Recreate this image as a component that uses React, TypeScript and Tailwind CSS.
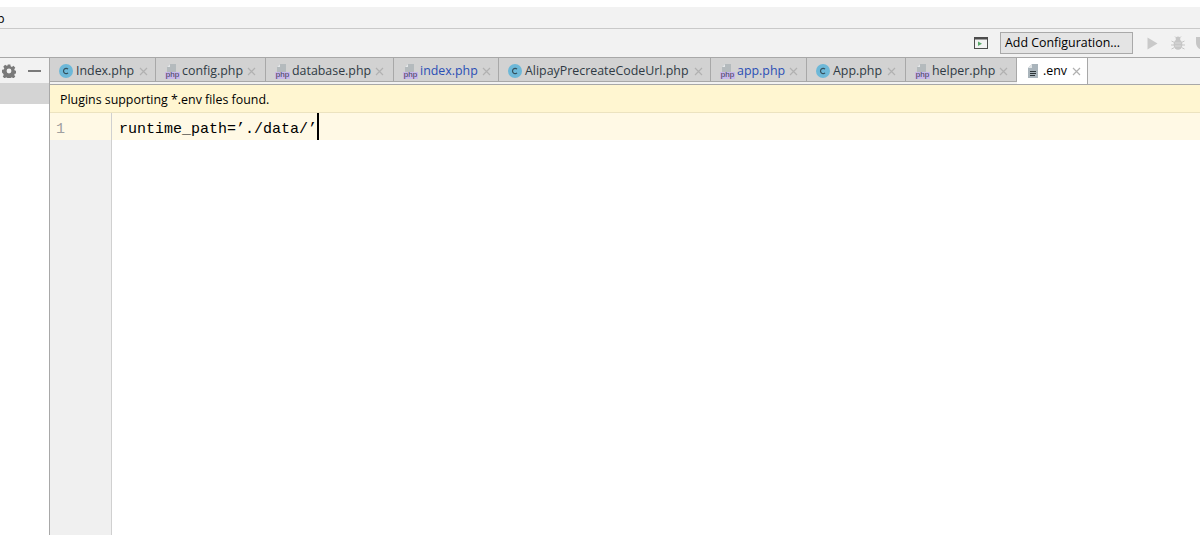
import React from "react";

const sans = "font-['Open_Sans','Noto_Sans',sans-serif]";

function ClassIcon() {
  return (
    <svg width="14" height="14" viewBox="0 0 14 14" className="shrink-0">
      <circle cx="7" cy="7" r="7" fill="#6db8d8" />
      <path d="M9 5.2A2.6 2.6 0 1 0 9 8.8" fill="none" stroke="#34505c" strokeWidth="1.2" />
    </svg>
  );
}

function PhpIcon() {
  return (
    <span className="relative block w-[15px] h-[15px] shrink-0">
      <svg width="15" height="15" viewBox="0 0 15 15" className="absolute left-0 top-0">
        <path d="M5 0h6v8H2V3z" fill="#b4babd" />
        <path d="M5 0v3H2z" fill="#e4e6e7" />
        <rect x="0" y="8" width="15" height="7" fill="#c9b8ea" />
      </svg>
      <span className="absolute left-0 top-[7.5px] w-[15px] text-center text-[8px] leading-[8px] text-[#3c3a55] font-['Liberation_Sans',sans-serif]">php</span>
    </span>
  );
}

function EnvIcon() {
  return (
    <svg width="10" height="14" viewBox="0 0 10 14" className="shrink-0">
      <path d="M4 0h6v14H0V4z" fill="#a9b4bb" />
      <path d="M4 0v4H0z" fill="#e1e5e7" />
      <path d="M2 7.5h6M2 9.5h6M2 11.5h5" stroke="#2b3337" strokeWidth="1" />
    </svg>
  );
}

function Close() {
  return (
    <svg width="9" height="9" viewBox="0 0 9 9" className="shrink-0">
      <path d="M1 1l7 7M8 1l-7 7" stroke="#b1b1b1" strokeWidth="1.2" />
    </svg>
  );
}

type Tab = { name: string; icon: "c" | "php" | "env"; w: string; blue?: boolean; active?: boolean };

function TabItem({ t }: { t: Tab }) {
  return (
    <div
      className={`${t.w} flex items-center shrink-0 border-r border-[#a8a8a8] ${
        t.active
          ? "h-[26px] bg-white gap-[5px] pl-[11px]"
          : `h-[24px] bg-[#d2d2d2] pl-[9px] pt-[3px] border-b ${t.icon === "php" ? "gap-[2px]" : "gap-[3px]"}`
      }`}
    >
      {t.icon === "c" ? <ClassIcon /> : t.icon === "php" ? <PhpIcon /> : <EnvIcon />}
      <span className={`text-[12.4px] leading-none whitespace-nowrap ${t.blue ? "text-[#2a4fb5]" : t.active ? "text-black" : "text-[#2f3a44]"}`}>
        {t.name}
      </span>
      <span className={`flex ${t.active ? "ml-0" : "ml-[2px]"}`}><Close /></span>
    </div>
  );
}

const tabs: Tab[] = [
  { name: "Index.php", icon: "c", w: "w-[106px]" },
  { name: "config.php", icon: "php", w: "w-[110px]" },
  { name: "database.php", icon: "php", w: "w-[128px]" },
  { name: "index.php", icon: "php", w: "w-[105px]", blue: true },
  { name: "AlipayPrecreateCodeUrl.php", icon: "c", w: "w-[212px]" },
  { name: "app.php", icon: "php", w: "w-[96px]", blue: true },
  { name: "App.php", icon: "c", w: "w-[99px]" },
  { name: "helper.php", icon: "php", w: "w-[111px]" },
  { name: ".env", icon: "env", w: "w-[71px]", active: true },
];

export default function App() {
  return (
    <div className={`w-[1200px] h-[535px] overflow-hidden bg-white flex flex-col ${sans}`}>
      <div className="h-[7px] shrink-0 bg-white" />
      <div className="h-[22px] shrink-0 bg-[#f2f2f2] border-b border-[#c9c9c9] flex items-center overflow-hidden pt-[3px]">
        <span className="text-[12.4px] leading-none text-black -ml-[3px]">p</span>
      </div>
      <div className="h-[29px] shrink-0 bg-[#f2f2f2] border-b border-[#a8a8a8] flex items-center justify-end overflow-hidden">
        <svg width="14" height="12" viewBox="0 0 14 12" className="shrink-0 mr-[12px]">
          <rect x="0.5" y="0.5" width="13" height="11" fill="#f2f2f2" stroke="#4d4d4d" />
          <rect x="0" y="0" width="14" height="2.5" fill="#4d4d4d" />
          <path d="M4 4.5l4 2.2-4 2.2z" fill="#59a869" />
        </svg>
        <div className="w-[133px] h-[22px] shrink-0 bg-[#e4e4e4] border border-[#a9a9a9] flex items-center pl-[4px] text-[12.4px] leading-none text-black whitespace-nowrap">
          Add Configuration...
        </div>
        <svg width="11" height="13" viewBox="0 0 11 13" className="shrink-0 ml-[14px]">
          <path d="M0.5 0.5l10 6-10 6z" fill="#c9c9c9" />
        </svg>
        <svg width="14" height="14" viewBox="0 0 14 14" className="shrink-0 ml-[13px]">
          <ellipse cx="7" cy="8.5" rx="4.4" ry="5.2" fill="#c6c6c6" />
          <circle cx="7" cy="3" r="2.4" fill="#c6c6c6" />
          <path d="M0.5 5l3 1.5M13.5 5l-3 1.5M0 9h3M14 9h-3M0.5 13l3-1.5M13.5 13l-3-1.5M4 0.5l1.5 1.5M10 0.5L8.5 2" stroke="#c6c6c6" strokeWidth="1" />
          <path d="M4 7h6M4 10h6" stroke="#dedede" strokeWidth="0.8" />
        </svg>
        <svg width="4" height="14" viewBox="0 0 4 14" className="shrink-0 ml-[11px]">
          <path d="M0 1h4v12C2 12.5 0 10 0 6z" fill="#c6c6c6" />
        </svg>
      </div>
      <div className="flex-1 flex min-h-0">
        <div className="w-[50px] shrink-0 border-r border-[#a8a8a8] bg-white flex flex-col">
          <div className="h-[25px] shrink-0 bg-[#f2f2f2] flex items-center pl-[2px] gap-[12px]">
            <svg width="14" height="14" viewBox="0 0 26 26" className="shrink-0">
              <path
                fillRule="evenodd"
                fill="#7a7a7a"
                d="M10.5 1h5l.6 3.4 2.3 1 2.8-2 3.5 3.5-2 2.8 1 2.3 3.3.6v5l-3.3.6-1 2.3 2 2.8-3.5 3.5-2.8-2-2.3 1-.6 3.3h-5l-.6-3.3-2.3-1-2.8 2-3.5-3.5 2-2.8-1-2.3L0 15.6v-5l3.3-.6 1-2.3-2-2.8L5.8 1.4l2.8 2 2.3-1zM13 8.5a4.5 4.5 0 1 0 0 9 4.5 4.5 0 0 0 0-9z"
              />
            </svg>
            <span className="block w-[13px] h-[2px] bg-[#7a7a7a]" />
          </div>
          <div className="h-[21px] shrink-0 bg-[#d4d4d4]" />
        </div>
        <div className="flex-1 min-w-0 flex flex-col">
          <div className="h-[26px] shrink-0 bg-[#f2f2f2] flex items-start">
            {tabs.map((t) => (
              <TabItem key={t.name} t={t} />
            ))}
          </div>
          <div className="h-px shrink-0 bg-[#a8a8a8]" />
          <div className="h-[28px] shrink-0 bg-[#fff6d1] border-b border-[#ece3c0] flex items-center pl-[10px] pt-[3px] text-[12.4px] leading-none text-black">
            Plugins supporting *.env files found.
          </div>
          <div className="flex-1 flex min-h-0">
            <div className="w-[62px] shrink-0 bg-[#f0f0f0] border-r border-[#d0d0d0]">
              <div className="h-[27px] bg-[#fff9e5] flex items-center pl-[6px] pt-[5px] text-[15px] leading-none text-[#a0a0a0] font-['Liberation_Mono',monospace]">
                1
              </div>
            </div>
            <div className="flex-1 min-w-0">
              <div className="h-[27px] bg-[#fff9e5] flex items-center pl-[7px] text-[15px] leading-none text-black font-['Liberation_Mono',monospace]">
                <span className="whitespace-pre pt-[5px]">runtime_path=’./data/’</span>
                <span className="block w-[2px] h-[27px] bg-black" />
              </div>
            </div>
          </div>
        </div>
      </div>
    </div>
  );
}
